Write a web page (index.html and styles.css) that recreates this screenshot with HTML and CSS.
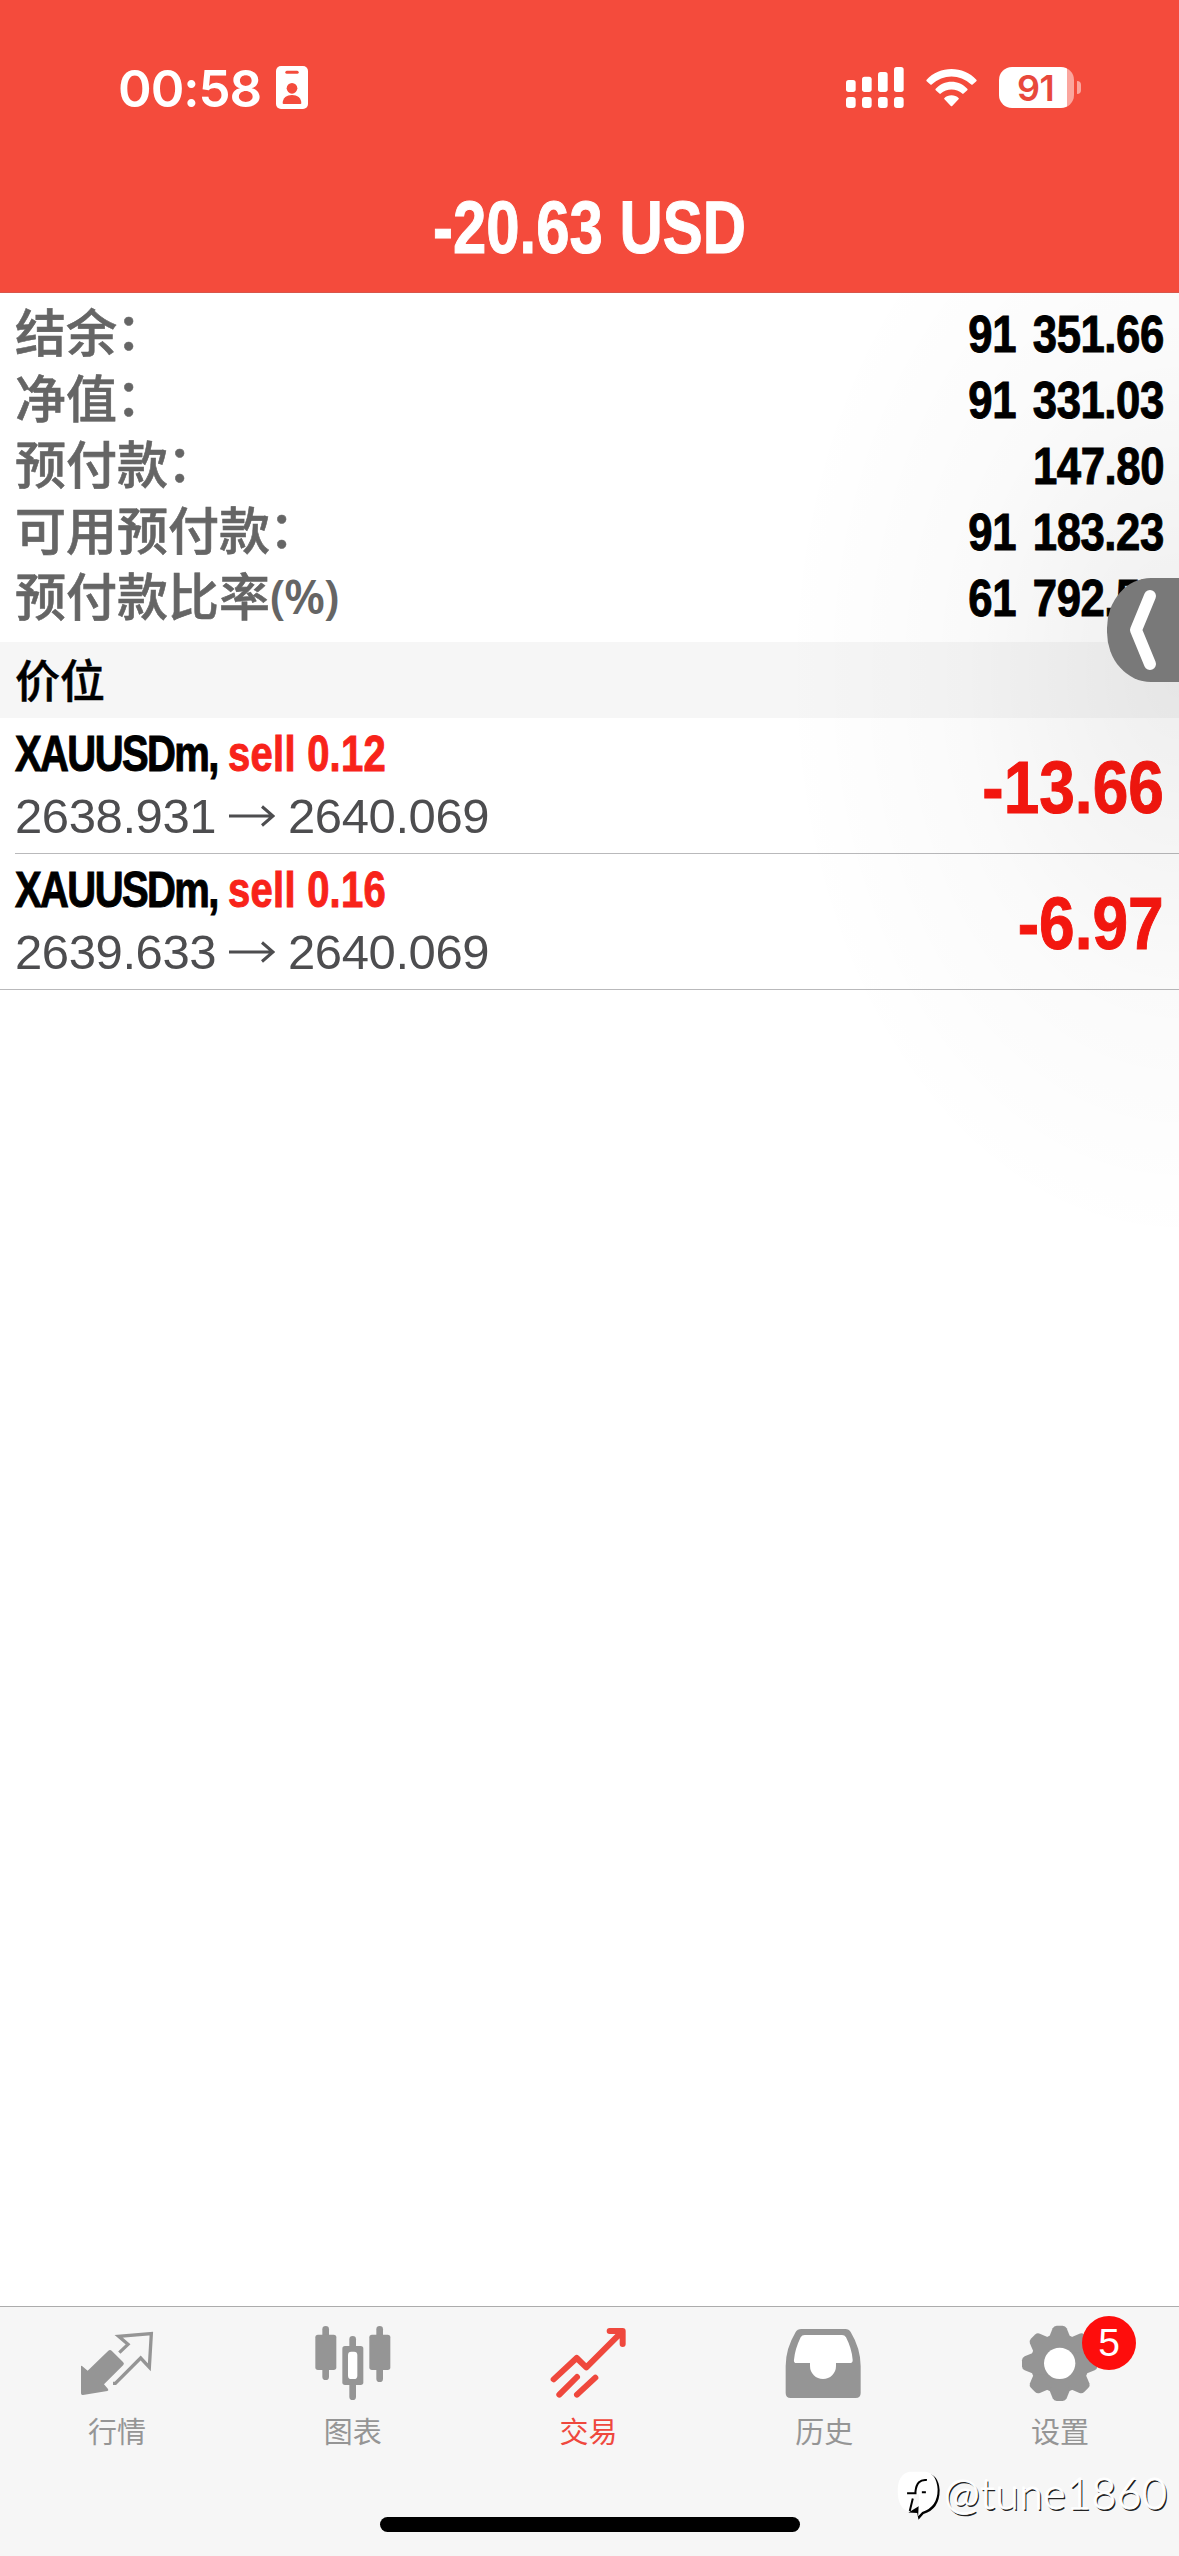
FILE: index.html
```html
<!DOCTYPE html>
<html lang="zh-CN">
<head>
<meta charset="utf-8">
<title>交易</title>
<link rel="stylesheet" href="styles.css">
</head>
<body>
<div class="screen">
  <header class="header">
    <div class="status">
      <div class="status-left">
        <span class="clock">00:58</span>
        <svg class="id-badge" viewBox="0 0 96 129"><rect width="96" height="129" rx="15" fill="#fff"/><rect x="28" y="14" width="40" height="9" rx="4.500" fill="#f44b3c"/><circle cx="48" cy="67" r="16" fill="#f44b3c"/><path d="M20 112c0-17 12-25 28-25s28 8 28 25q0 2-3 2H23q-3 0-3-2z" fill="#f44b3c"/></svg>
      </div>
      <div class="status-right">
        <svg class="signal" viewBox="0 0 174 123" fill="#fff"><rect y="39" width="29" height="36" rx="8"/><rect x="48" y="29" width="29" height="46" rx="8"/><rect x="96" y="15" width="29" height="60" rx="8"/><rect x="144" width="29" height="75" rx="8"/><rect y="90" width="29" height="33" rx="9"/><rect x="48" y="90" width="29" height="33" rx="9"/><rect x="96" y="90" width="29" height="33" rx="9"/><rect x="144" y="90" width="29" height="33" rx="9"/></svg>
        <svg class="wifi" viewBox="318 84 152 116" fill="#fff"><path d="M320 119C358 76 430 76 468 119q2 2 0 4L457 133q-2 1-4 0C418 101 370 101 335 133q-2 1-4 0L320 123q-2-2 0-4zM347 146C371 118 417 118 441 146q2 2 0 4l-11 10q-2 2-4 0C408 144 380 144 362 160q-2 2-4 0l-11-10q-2-2 0-4zM373 173c10-11 32-11 42 0q2 2 0 4l-19 20q-2 2-4 0l-19-20q-2-2 0-4z"/></svg>
        <div class="battery"><span class="battery-body">91</span><span class="battery-cap"></span></div>
      </div>
    </div>
    <h1 class="total">-20.63 USD</h1>
  </header>

  <main class="content">
    <dl class="summary">
      <div class="summary-row"><dt>结余<i>：</i></dt><dd>91 351.66</dd></div>
      <div class="summary-row"><dt>净值<i>：</i></dt><dd>91 331.03</dd></div>
      <div class="summary-row"><dt>预付款<i>：</i></dt><dd>147.80</dd></div>
      <div class="summary-row"><dt>可用预付款<i>：</i></dt><dd>91 183.23</dd></div>
      <div class="summary-row"><dt>预付款比率<span class="unit">(%)</span></dt><dd>61 792.57</dd></div>
    </dl>
    <h2 class="section">价位</h2>
    <ul class="positions">
      <li class="position">
        <div class="info">
          <p class="symbol">XAUUSDm, <b>sell 0.12</b></p>
          <p class="prices"><span class="open">2638.931</span><svg class="arrow" viewBox="0 0 46 22"><path d="M0 11H44M33 1.500L44 11L33 20.500"/></svg><span>2640.069</span></p>
        </div>
        <div class="profit">-13.66</div>
      </li>
      <li class="position">
        <div class="info">
          <p class="symbol">XAUUSDm, <b>sell 0.16</b></p>
          <p class="prices"><span class="open">2639.633</span><svg class="arrow" viewBox="0 0 46 22"><path d="M0 11H44M33 1.500L44 11L33 20.500"/></svg><span>2640.069</span></p>
        </div>
        <div class="profit">-6.97</div>
      </li>
    </ul>
    <div class="shade"></div>
  </main>

  <div class="drawer"><svg viewBox="0 0 72 104"><path d="M43 18L29 52L43 86"/></svg></div>

  <nav class="tabs">
    <a class="tab"><svg class="icon" viewBox="99 90 270 240" fill="#959595"><path d="M123 229q0-3 3-1l17 14 62-60q5-4 10 0l34 34q5 5 1 9l-58 58 12 14q3 5-2 6l-73 12q-6 1-6-5z"/><path d="M238 188L264 163L236 139L334 131L328 232L302 204L226 280H219" fill="none" stroke="#959595" stroke-width="10"/></svg><span>行情</span></a>
    <a class="tab"><svg class="icon" viewBox="806 90 270 240" fill="#959595"><rect x="846" y="108" width="20" height="162" rx="10"/><rect x="825" y="134" width="63" height="106" rx="8"/><rect x="927" y="138" width="20" height="192" rx="10"/><rect x="906" y="168" width="63" height="117" rx="8"/><rect x="923" y="185" width="28" height="82" rx="10" fill="#fff"/><rect x="1008" y="108" width="20" height="168" rx="10"/><rect x="987" y="134" width="63" height="106" rx="8"/></svg><span>图表</span></a>
    <a class="tab active"><svg class="icon" viewBox="133 90 270 240" fill="none" stroke="#ef483d" stroke-width="18" stroke-linecap="round" stroke-linejoin="round"><path d="M162 268L231 204L260 232L368 124M330 123H369V162M179 314L232 261M232 314L287 263"/></svg><span>交易</span></a>
    <a class="tab"><svg class="icon" viewBox="841 90 270 240"><path d="M905 117H1037Q1048 117 1053 126Q1083 176 1083 228V309Q1083 324 1068 324H873Q858 324 858 309V228Q858 176 888 126Q893 117 905 117Z" fill="#959595"/><path d="M915 135H1027Q1035 135 1039 142Q1056 175 1059 209Q1060 219 1050 219H1009V228A39 39 0 0 1 931 228V219H891Q881 219 883 209Q886 177 903 142Q907 135 915 135Z" fill="#fff"/></svg><span>历史</span></a>
    <a class="tab"><svg class="icon" viewBox="408 90 270 244"><g fill="#959595"><circle cx="539" cy="220" r="88"/><path id="cog" d="M506 145L518 115Q522 107 530 107H548Q556 107 560 115L572 145V295L560 325Q556 333 548 333H530Q522 333 518 325L506 295Z"/><use href="#cog" transform="rotate(45 539 220)"/><use href="#cog" transform="rotate(90 539 220)"/><use href="#cog" transform="rotate(135 539 220)"/></g><circle cx="539" cy="220" r="47" fill="#fff"/></svg><span>设置</span><em class="badge">5</em></a>
  </nav>
  <div class="home-indicator"></div>
  <div class="watermark"><svg viewBox="52 543 128 146"><path d="M140 550Q176 554 179 600Q179 656 131 671L116 688L112 668L86 667L130 640Z" fill="#000"/><path d="M88 545H136Q170 549 173 598Q173 650 127 665L115 678L118 612H104L94 662L82 662Q54 650 54 601Q54 554 88 545Z" fill="#fff"/><path d="M141 570Q111 566 107 604V609H82M99 625L90 662M126 606H138" fill="none" stroke="#000" stroke-width="6"/></svg><span>@tune1860</span></div>
</div>
</body>
</html>
```

FILE: styles.css
```css
* { box-sizing: border-box; margin: 0; padding: 0; }

body { background: #fff; }

.screen {
  position: relative;
  display: flex;
  flex-direction: column;
  width: 1179px;
  height: 2556px;
  overflow: hidden;
  background: #fff;
  color: #000;
  font-family: "Liberation Sans", "Noto Sans CJK SC", sans-serif;
}

.header {
  height: 293px;
  background: #f44b3c;
  border-bottom: 1px solid #d8564b;
  color: #fff;
}

.status {
  display: flex;
  justify-content: space-between;
  height: 175px;
  padding: 66px 98px 0 118px;
}

.status-left, .status-right { display: flex; align-items: flex-start; }

.clock {
  width: 158px;
  font: 600 51px/46px Inter, sans-serif;
  letter-spacing: -1px;
}

.id-badge { width: 32px; height: 43px; }
.signal { width: 58px; height: 41px; margin: 1px 22px 0 0; }
.wifi { width: 51px; height: 39px; margin: 2px 22px 0 0; }

.battery { display: flex; align-items: center; gap: 3px; margin-top: 1px; }

.battery-body {
  width: 75px;
  height: 41px;
  padding-right: 2px;
  border-radius: 13px;
  background: linear-gradient(90deg, #fff 68px, #fba59d 68px);
  color: #e8483c;
  font: 600 36px/42px Inter, sans-serif;
  letter-spacing: -0.5px;
  text-align: center;
}

.battery-cap { width: 4px; height: 13px; border-radius: 0 6px 6px 0; background: #fba59d; }

/* Condensed bold face: squeezed horizontally, stems thickened to compensate */
.total, .summary dd, .symbol, .profit {
  font-family: "Liberation Sans", sans-serif;
  font-weight: 700;
  -webkit-text-stroke: 1px currentColor;
}

.total {
  font-size: 74px;
  line-height: 105px;
  text-align: center;
  transform: scaleX(0.81);
}

.content { position: relative; flex: 1; }

.summary { padding: 8px 15px 0; height: 349px; }

.summary-row {
  display: flex;
  justify-content: space-between;
  height: 66px;
  line-height: 66px;
}

.summary dt {
  display: flex;
  height: 60px;
  color: #656565;
  font-family: "Noto Sans CJK SC", sans-serif;
  font-size: 51px;
  font-weight: 500;
  line-height: 58px;
  -webkit-text-stroke: 0.6px #656565;
}

.summary i { margin: -2px 0 0 -1px; font-style: normal; }

.unit { font: 600 47px/62px "Noto Sans", sans-serif; letter-spacing: -1.2px; -webkit-text-stroke: 0; }

.summary dd {
  font-size: 52px;
  letter-spacing: -0.5px;
  word-spacing: 6px;
  transform: scaleX(0.84);
  transform-origin: right;
}

.section {
  height: 76px;
  padding-left: 15px;
  background: #f6f6f6;
  font: 500 45px/73px "Noto Sans CJK SC", sans-serif;
  -webkit-text-stroke: 0.5px #000;
}

.positions { list-style: none; }

.position {
  display: flex;
  justify-content: space-between;
  height: 136px;
  margin-left: 15px;
  padding-right: 15px;
  border-bottom: 1px solid #b9b9bb;
}

.position:last-child { margin-left: 0; padding-left: 15px; }

.info { padding-top: 5px; }

.symbol {
  font-size: 50px;
  line-height: 62px;
  letter-spacing: -2px;
  transform: scaleX(0.8);
  transform-origin: left;
  white-space: nowrap;
}

.symbol b { margin-left: 1px; color: #f8231a; letter-spacing: 0.3px; }

.prices {
  display: flex;
  align-items: center;
  color: #4d4d4f;
  font-size: 49px;
  line-height: 62px;
  letter-spacing: -0.4px;
}

.open { width: 214px; }
.arrow { width: 46px; height: 22px; margin-right: 13px; fill: none; stroke: #4d4d4f; stroke-width: 3; }

.profit {
  color: #f8170f;
  font-size: 74px;
  line-height: 139px;
  transform: scaleX(0.865);
  transform-origin: right;
}

.shade {
  position: absolute;
  top: 0;
  right: 0;
  width: 420px;
  height: 960px;
  background: radial-gradient(ellipse 400px 580px at 100% 380px, rgba(0, 0, 0, 0.065), rgba(0, 0, 0, 0.02) 55%, transparent);
  pointer-events: none;
}

.drawer {
  position: absolute;
  top: 578px;
  right: 0;
  width: 72px;
  height: 104px;
  border-radius: 44px 0 0 44px / 50px 0 0 50px;
  background: #797979;
}

.drawer svg {
  display: block;
  fill: none;
  stroke: #fff;
  stroke-width: 12;
  stroke-linecap: round;
  stroke-linejoin: round;
}

.tabs {
  display: flex;
  height: 250px;
  padding-top: 13px;
  border-top: 1px solid #acacac;
  background: #f6f6f6;
}

.tab {
  position: relative;
  display: flex;
  flex: 1;
  flex-direction: column;
  align-items: center;
  color: #959595;
  font: 400 29px/40px "Noto Sans CJK SC", sans-serif;
}

.tab.active { color: #ef483d; }
.icon { width: 90px; height: 80px; margin-bottom: 10px; }
.tab:last-child .icon { height: 81.333px; margin-bottom: 8.667px; }
.tab span { margin-right: 2px; }

.badge {
  position: absolute;
  top: -4px;
  right: 43px;
  width: 54px;
  height: 54px;
  border-radius: 50%;
  background: #fe0d0c;
  color: #fff;
  font: 400 39px/54px "Liberation Sans", sans-serif;
  text-align: center;
}

.home-indicator {
  position: absolute;
  left: 380px;
  top: 2517px;
  width: 420px;
  height: 15px;
  border-radius: 8px;
  background: #000;
}

.watermark {
  position: absolute;
  left: 897px;
  top: 2471px;
  display: flex;
  color: #fff;
  font: 300 43px/43px Lato, sans-serif;
  letter-spacing: 0.4px;
  text-shadow: 1.5px 1.5px 0 #222;
  -webkit-text-stroke: 0.8px #fff;
}

.watermark svg { width: 43px; height: 49px; margin-right: 4px; }
```
